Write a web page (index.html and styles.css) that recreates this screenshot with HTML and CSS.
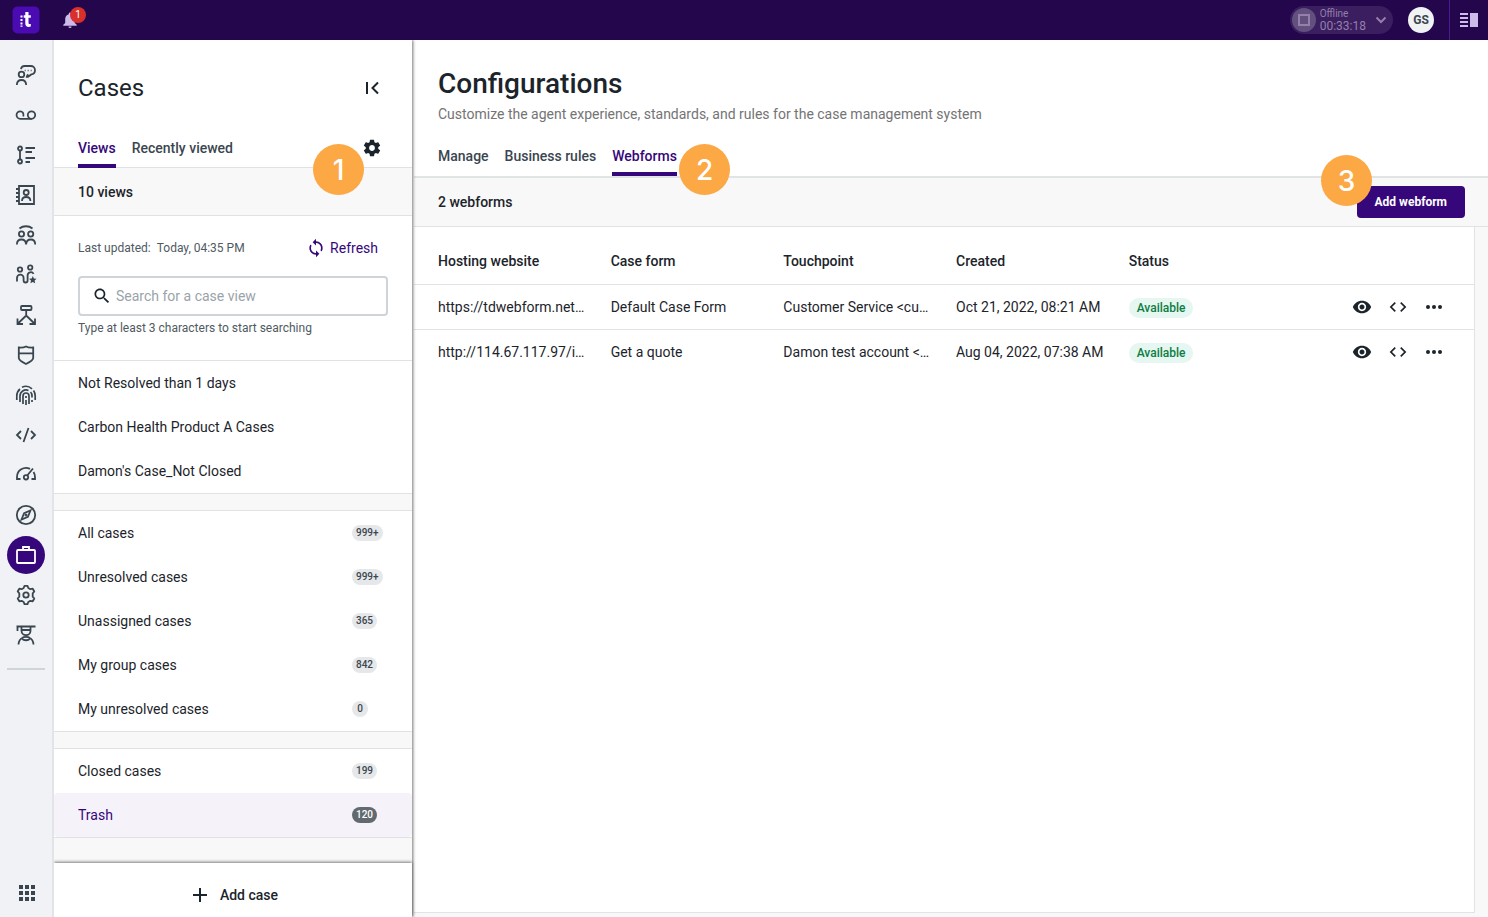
FILE: index.html
```html
<!DOCTYPE html>
<html lang="en">
<head>
  <meta charset="UTF-8" />
  <meta name="viewport" content="width=device-width, initial-scale=1.0"/>
  <title>Cases - Configurations</title>
  <link rel="stylesheet" href="styles.css">
</head>
<body>

  <header class="topbar">
    <a class="logo" href="#" aria-label="Home">
      <svg width="28" height="28" viewBox="0 0 28 28">
        <rect x="0.500" y="0.500" width="27" height="27" rx="5" fill="#4b0bb3"/>
        <path d="M13.300 6h3.200v3.200h2.300v2.500h-2.300v5c0 1 .4 1.400 1.200 1.400.4 0 .8 0 1.100-.2v2.600c-.6.300-1.200.4-2 .4-2.300 0-3.500-1.200-3.500-3.500v-5.700h-1.600V9.200h1.600z" fill="#fff"/>
        <path d="M8.500 9.500h2v2h-2zM8.500 13h2v2h-2zM8.500 16.500h2v2h-2zM8.500 19.500h2v1.200h-2z" fill="#fff"/>
      </svg>
    </a>
    <button class="bell" aria-label="Notifications">
      <svg width="16" height="18" viewBox="0 0 16 18" fill="#cdbbe9">
        <path d="M8 1.500a1.200 1.200 0 0 0-1.200 1.200v.5C4.500 3.800 3.200 5.700 3.200 8v4L1.300 13.800v.9h13.400v-.9L12.800 12V8c0-2.300-1.300-4.200-3.600-4.800v-.5A1.200 1.200 0 0 0 8 1.500zM6.400 15.500a1.600 1.600 0 0 0 3.200 0z"/>
      </svg>
      <span class="bell-count">1</span>
    </button>
    <div class="topbar-right">
      <button class="agent-status">
        <span class="status-icon"><span></span></span>
        <span class="status-text">
          <span class="status-name">Offline</span>
          <span class="status-time">00:33:18</span>
        </span>
        <svg width="12" height="8" viewBox="0 0 12 8" fill="none" stroke="#957fab" stroke-width="2"><path d="M1.500 1.500 6 6l4.500-4.500"/></svg>
      </button>
      <button class="avatar">GS</button>
      <button class="panel-toggle" aria-label="Toggle side panel">
        <svg width="18" height="14" viewBox="0 0 18 14" fill="#cdbbe9"><path d="M0 0h8v2H0zM0 4h8v2H0zM0 8h8v2H0zM0 12h8v2H0zM10 0h8v14h-8z"/></svg>
      </button>
    </div>
  </header>

  <div class="layout">

    <nav class="rail" aria-label="Apps">
      <a href="#" aria-label="Conversations"><svg viewBox="0 0 24 24"><circle cx="7.500" cy="11.400" r="2.800"/><path d="M2.800 22c.2-3.300 2-5 4.700-5s4.500 1.700 4.700 5"/><path d="M7 6.200C7.300 4.200 8.700 3 10.600 3h6.200A4.200 4.200 0 0 1 21 7.200c0 2.400-1.500 3.900-3.700 4.200l-3.300 2.400h-1.200c.2-1.200.7-1.800 1.500-2.400"/><path d="M10.500 7.500h1.500M13.500 7.500H15M16.500 7.500H18" stroke-width="1.300" opacity=".6"/></svg></a>
      <a href="#" aria-label="Voicemail"><svg viewBox="0 0 24 24"><path d="M9.300 13.500c.8-2.900-.8-5.200-3-5.200a3.700 3.700 0 0 0 0 7.500h11.400"/><circle cx="17.500" cy="12.100" r="3.700"/></svg></a>
      <a href="#" aria-label="Activities"><svg viewBox="0 0 24 24"><circle cx="6" cy="5.500" r="2"/><circle cx="6" cy="18.500" r="2"/><path d="M6 7.500v9M11.500 5h9.500M11.500 9H18M11.500 15h9.500M11.500 19H16"/></svg></a>
      <a href="#" aria-label="Contacts"><svg viewBox="0 0 24 24"><path d="M5 3h15v18H5zM2 6h3M2 10h3M2 14h3M2 18h3"/><circle cx="12.200" cy="9.500" r="2.500"/><path d="M8 18c0-2.600 1.700-4 4.200-4s4.200 1.400 4.200 4"/></svg></a>
      <a href="#" aria-label="Teams"><svg viewBox="0 0 24 24"><circle cx="7.500" cy="11" r="2.600"/><circle cx="16.700" cy="11" r="2.600"/><path d="M2.900 21.500c0-3.300 1.700-5 4.600-5s4.400 1.700 4.600 5c.2-3.300 1.700-5 4.600-5s4.500 1.700 4.500 5M5.500 5.500c3.700-3 9.300-3 13 0"/></svg></a>
      <a href="#" aria-label="Engagement"><svg viewBox="0 0 24 24"><circle cx="6" cy="6.500" r="2.200"/><circle cx="16.200" cy="4.500" r="2.200"/><path d="M3 18.500v-3.500a3.300 3.300 0 0 1 6.600 0v2.500a2 2 0 0 0 4 0v-5a3.200 3.200 0 0 1 6-1.600"/><path d="m18.800 13 1.100 2.500 2.700.3-2 1.800.6 2.700-2.400-1.400-2.400 1.400.6-2.700-2-1.800 2.700-.3z" fill="#3a464f" stroke="none"/></svg></a>
      <a href="#" aria-label="Flows"><svg viewBox="0 0 24 24"><rect x="7" y="3" width="10.500" height="4" rx="1"/><path d="M12.200 7v5.500L4 20.500M12.200 12.500l8.200 8M3.500 15.500V21h5.500M21 15.500V21h-5.500"/></svg></a>
      <a href="#" aria-label="Guardian"><svg viewBox="0 0 24 24"><path d="M4.800 4.500c3 .2 5.400 0 7.200-1 1.800 1 4.200 1.200 7.200 1V15c0 2.300-3.800 4.300-7.200 6-3.400-1.700-7.200-3.700-7.200-6zM5 10.300h14"/></svg></a>
      <a href="#" aria-label="Identity"><svg viewBox="0 0 24 24"><path d="M2.800 17v-4a9.200 9.200 0 0 1 3.200-7M8 4.200a9.200 9.200 0 0 1 10 1.600M19.500 7.500a9.200 9.200 0 0 1 1.700 5.500v4M6 19v-6a6 6 0 0 1 8.500-5.500M16.500 9c1 1 1.500 2.500 1.500 4v1.500M18 17v2M9 21v-8a3 3 0 0 1 6 0v8M12 13v2M12 17v5" stroke-width="1.700"/></svg></a>
      <a href="#" aria-label="Builder"><svg viewBox="0 0 24 24"><path d="m7 8-4 4 4 4M17 8l4 4-4 4M14.500 5l-5 14"/></svg></a>
      <a href="#" aria-label="Live"><svg viewBox="0 0 24 24"><path d="M6.500 16H3v-2a9 9 0 0 1 13-8.100M19.500 8.900A9 9 0 0 1 21 14v2h-3.500M13.200 12.500l5.800-7"/><circle cx="12" cy="14.300" r="2.200"/></svg></a>
      <a href="#" aria-label="Explore"><svg viewBox="0 0 24 24"><circle cx="12" cy="12" r="9.200"/><path d="m16.500 7.500-2.600 6.400-6.400 2.600 2.600-6.400z"/><circle cx="12" cy="12" r=".6"/></svg></a>
      <a href="#" class="active" aria-label="Cases"><svg viewBox="0 0 24 24"><rect x="3" y="7" width="18" height="13" rx="1"/><path d="M9 7V4h6v3"/></svg></a>
      <a href="#" aria-label="Admin"><svg viewBox="0 0 24 24"><path d="m9.700 5 .8-2.200h3l.8 2.200 2.100 1.200 2.300-.5 1.600 2.800-1.600 1.800v3.400l1.600 1.800-1.600 2.800-2.300-.5-2.100 1.200-.8 2.200h-3L9.700 19l-2.100-1.200-2.300.5-1.600-2.800 1.600-1.800v-3.400L3.700 8.500l1.600-2.800 2.300.5z" stroke-linejoin="round"/><circle cx="12" cy="12" r="2.700"/></svg></a>
      <a href="#" aria-label="Training"><svg viewBox="0 0 24 24"><path d="M2.500 3.500h19M3.500 3.500V8M7.500 3.500v4.200a4.500 4.500 0 0 0 9 0V3.500M7.500 7h9M4.500 21.500c.2-3.500 1.500-5.500 4-6.500M19.500 21.500c-.2-3.500-1.500-5.500-4-6.500M8 15c1 3 7 3 8 0M8 15c2-1.500 6-1.500 8 0"/></svg></a>
      <hr>
      <button class="apps" aria-label="All apps">
        <svg width="16" height="16" viewBox="0 0 16 16"><path d="M0 0h4v4H0zM6 0h4v4H6zM12 0h4v4h-4zM0 6h4v4H0zM6 6h4v4H6zM12 6h4v4h-4zM0 12h4v4H0zM6 12h4v4H6zM12 12h4v4h-4z"/></svg>
      </button>
    </nav>

    <aside class="sidebar">
      <div class="sidebar-header">
        <h2>Cases</h2>
        <button class="icon-btn" aria-label="Collapse">
          <svg width="14" height="14" viewBox="0 0 14 14" fill="none" stroke="#1c242b" stroke-width="2"><path d="M2 1v12M13 1.500 7.500 7l5.500 5.500"/></svg>
        </button>
      </div>
      <div class="sidebar-tabs">
        <a href="#" class="tab active">Views</a>
        <a href="#" class="tab">Recently viewed</a>
        <button class="icon-btn settings" aria-label="Configurations">
          <svg width="20" height="20" viewBox="0 0 24 24" fill="#1c242b"><path d="M19.430 12.980c.04-.32.07-.64.07-.98s-.03-.66-.07-.98l2.110-1.650c.19-.15.24-.42.12-.64l-2-3.460c-.12-.22-.39-.3-.61-.22l-2.490 1c-.52-.4-1.080-.73-1.690-.98l-.38-2.650C14.460 2.180 14.250 2 14 2h-4c-.25 0-.46.18-.49.42l-.38 2.650c-.61.25-1.170.59-1.690.98l-2.490-1c-.23-.09-.49 0-.61.22l-2 3.460c-.13.22-.07.49.12.64l2.110 1.650c-.04.32-.07.65-.07.98s.03.66.07.98l-2.110 1.650c-.19.15-.24.42-.12.64l2 3.460c.12.22.39.3.61.22l2.490-1c.52.4 1.080.73 1.690.98l.38 2.650c.03.24.24.42.49.42h4c.25 0 .46-.18.49-.42l.38-2.650c.61-.25 1.170-.59 1.690-.98l2.490 1c.23.09.49 0 .61-.22l2-3.460c.12-.22.07-.49-.12-.64zM12 15.500c-1.930 0-3.500-1.570-3.500-3.500s1.570-3.500 3.500-3.500 3.500 1.570 3.500 3.500-1.570 3.500-3.500 3.500z"/></svg>
        </button>
        <span class="marker marker-1">1</span>
      </div>
      <div class="view-count">10 views</div>

      <div class="search-area">
        <div class="updated">
          <span>Last updated:</span>
          <span>Today, 04:35 PM</span>
          <button class="refresh">
            <svg width="20" height="20" viewBox="0 0 24 24" fill="#36077b"><path d="M12 4V1L8 5l4 4V6c3.310 0 6 2.690 6 6 0 1.010-.25 1.970-.7 2.800l1.460 1.460C19.540 15.030 20 13.570 20 12c0-4.420-3.580-8-8-8zm0 14c-3.310 0-6-2.690-6-6 0-1.010.25-1.970.7-2.800L5.240 7.740C4.460 8.970 4 10.430 4 12c0 4.420 3.580 8 8 8v3l4-4-4-4z"/></svg>
            Refresh
          </button>
        </div>
        <label class="search">
          <svg width="20" height="20" viewBox="0 0 24 24" fill="#1c242b"><path d="M15.500 14h-.79l-.28-.27C15.410 12.590 16 11.110 16 9.500 16 5.910 13.090 3 9.500 3S3 5.910 3 9.500 5.910 16 9.500 16c1.610 0 3.090-.59 4.230-1.570l.27.28v.79l5 4.990L20.490 19l-4.990-5zm-6 0C7.010 14 5 11.990 5 9.500S7.010 5 9.500 5 14 7.010 14 9.500 11.990 14 9.500 14z"/></svg>
          <input type="text" placeholder="Search for a case view" aria-label="Search for a case view">
        </label>
        <p class="hint">Type at least 3 characters to start searching</p>
      </div>

      <ul class="views">
        <li><a href="#">Not Resolved than 1 days</a></li>
        <li><a href="#">Carbon Health Product A Cases</a></li>
        <li><a href="#">Damon's Case_Not Closed</a></li>
      </ul>
      <ul class="views">
        <li><a href="#">All cases <span class="count-cell"><span class="count">999+</span></span></a></li>
        <li><a href="#">Unresolved cases <span class="count-cell"><span class="count">999+</span></span></a></li>
        <li><a href="#">Unassigned cases <span class="count-cell"><span class="count">365</span></span></a></li>
        <li><a href="#">My group cases <span class="count-cell"><span class="count">842</span></span></a></li>
        <li><a href="#">My unresolved cases <span class="count-cell"><span class="count">0</span></span></a></li>
      </ul>
      <ul class="views">
        <li><a href="#">Closed cases <span class="count-cell"><span class="count">199</span></span></a></li>
        <li><a href="#" class="selected">Trash <span class="count-cell"><span class="count">120</span></span></a></li>
      </ul>

      <div class="sidebar-footer">
        <button class="add-case">
          <svg width="14" height="14" viewBox="0 0 14 14" fill="#1c242b"><path d="M6 0h2v6h6v2H8v6H6V8H0V6h6z"/></svg>
          Add case
        </button>
      </div>
    </aside>

    <main class="main">
      <div class="main-header">
        <h1>Configurations</h1>
        <p>Customize the agent experience, standards, and rules for the case management system</p>
        <nav class="main-tabs">
          <a href="#" class="tab">Manage</a>
          <a href="#" class="tab">Business rules</a>
          <a href="#" class="tab active">Webforms<span class="marker marker-2">2</span></a>
        </nav>
      </div>
      <div class="toolbar">
        <span>2 webforms</span>
        <div class="toolbar-action">
          <button class="add-webform">Add webform</button>
          <span class="marker marker-3">3</span>
        </div>
      </div>
      <div class="table-wrap">
        <table>
          <thead>
            <tr>
              <th>Hosting website</th>
              <th>Case form</th>
              <th>Touchpoint</th>
              <th>Created</th>
              <th>Status</th>
              <th></th>
            </tr>
          </thead>
          <tbody>
            <tr>
              <td><span class="cut">https://tdwebform.netlify.app</span></td>
              <td>Default Case Form</td>
              <td><span class="cut">Customer Service &lt;customer&gt;</span></td>
              <td>Oct 21, 2022, 08:21 AM</td>
              <td><span class="badge">Available</span></td>
              <td class="actions">
                <button class="icon-btn" aria-label="Preview"><svg width="20" height="20" viewBox="0 0 24 24"><path d="M12 4.500C7 4.500 2.730 7.610 1 12c1.730 4.390 6 7.500 11 7.500s9.270-3.110 11-7.500c-1.730-4.390-6-7.500-11-7.500zM12 17c-2.760 0-5-2.240-5-5s2.240-5 5-5 5 2.240 5 5-2.240 5-5 5zm0-8c-1.660 0-3 1.340-3 3s1.340 3 3 3 3-1.340 3-3-1.340-3-3-3z"/></svg></button>
                <button class="icon-btn" aria-label="Embed code"><svg width="20" height="20" viewBox="0 0 24 24"><path d="M9.400 16.600L4.800 12l4.600-4.600L8 6l-6 6 6 6 1.400-1.400zm5.200 0l4.600-4.600-4.600-4.600L16 6l6 6-6 6-1.400-1.400z"/></svg></button>
                <button class="icon-btn" aria-label="More"><svg width="20" height="20" viewBox="0 0 20 20"><circle cx="4" cy="10" r="2"/><circle cx="10" cy="10" r="2"/><circle cx="16" cy="10" r="2"/></svg></button>
              </td>
            </tr>
            <tr>
              <td><span class="cut">http://114.67.117.97/index</span></td>
              <td>Get a quote</td>
              <td><span class="cut">Damon test account &lt;damon&gt;</span></td>
              <td>Aug 04, 2022, 07:38 AM</td>
              <td><span class="badge">Available</span></td>
              <td class="actions">
                <button class="icon-btn" aria-label="Preview"><svg width="20" height="20" viewBox="0 0 24 24"><path d="M12 4.500C7 4.500 2.730 7.610 1 12c1.730 4.390 6 7.500 11 7.500s9.270-3.110 11-7.500c-1.730-4.390-6-7.500-11-7.500zM12 17c-2.760 0-5-2.240-5-5s2.240-5 5-5 5 2.240 5 5-2.240 5-5 5zm0-8c-1.660 0-3 1.340-3 3s1.340 3 3 3 3-1.340 3-3-1.340-3-3-3z"/></svg></button>
                <button class="icon-btn" aria-label="Embed code"><svg width="20" height="20" viewBox="0 0 24 24"><path d="M9.400 16.600L4.800 12l4.600-4.600L8 6l-6 6 6 6 1.400-1.400zm5.200 0l4.600-4.600-4.600-4.600L16 6l6 6-6 6-1.400-1.400z"/></svg></button>
                <button class="icon-btn" aria-label="More"><svg width="20" height="20" viewBox="0 0 20 20"><circle cx="4" cy="10" r="2"/><circle cx="10" cy="10" r="2"/><circle cx="16" cy="10" r="2"/></svg></button>
              </td>
            </tr>
          </tbody>
        </table>
      </div>
    </main>

  </div>

</body>
</html>
```
FILE: styles.css
```css
* {
  box-sizing: border-box;
}

body {
  margin: 0;
  min-height: 100vh;
  display: flex;
  flex-direction: column;
  font-family: Roboto, sans-serif;
  font-size: 14px;
  line-height: 20px;
  color: #1c242b;
  background: #fff;
}

a {
  color: inherit;
  text-decoration: none;
}

button {
  padding: 0;
  border: none;
  background: none;
  font: inherit;
  color: inherit;
  cursor: pointer;
}

svg {
  display: block;
  flex: none;
}

/* Top bar */
.topbar {
  position: relative;
  z-index: 1;
  display: flex;
  align-items: center;
  height: 40px;
  padding-left: 12px;
  background: #23064b;
}

.bell {
  position: relative;
  margin-left: 22px;
}

.bell-count {
  position: absolute;
  left: 8px;
  top: -4px;
  width: 16px;
  height: 16px;
  border-radius: 50%;
  background: #d9302c;
  color: #fff;
  font-size: 10px;
  line-height: 16px;
}

.topbar-right {
  display: flex;
  align-items: center;
  margin-left: auto;
}

.agent-status {
  display: flex;
  align-items: center;
  gap: 4px;
  height: 28px;
  padding: 0 6px 0 2px;
  border-radius: 14px;
  background: #3a1e60;
  color: #957fab;
  text-align: left;
}

.agent-status svg {
  margin-left: 5px;
}

.status-icon {
  display: flex;
  align-items: center;
  justify-content: center;
  width: 24px;
  height: 24px;
  border-radius: 50%;
  background: #62517e;
}

.status-icon span {
  width: 12px;
  height: 12px;
  border: 2px solid #957fab;
}

.status-text {
  display: flex;
  flex-direction: column;
}

.status-name {
  font-size: 10px;
  line-height: 12px;
}

.status-time {
  font-size: 12px;
  line-height: 12px;
}

.avatar {
  width: 26px;
  height: 26px;
  margin: 0 15px;
  border-radius: 50%;
  background: #f0f2f4;
  color: #3a464f;
  font-size: 12px;
  font-weight: 700;
}

.panel-toggle {
  display: flex;
  align-items: center;
  height: 40px;
  padding: 0 10px;
  border-left: 1px solid #4b1c91;
}

/* Left rail */
.layout {
  flex: 1;
  display: flex;
}

.rail {
  position: relative;
  z-index: 1;
  flex: none;
  display: flex;
  flex-direction: column;
  align-items: center;
  gap: 2px;
  width: 54px;
  padding: 16px 0 12px;
  border-right: 2px solid #e2e4e7;
  background: #f0f2f5;
}

.rail a {
  display: flex;
  align-items: center;
  justify-content: center;
  width: 38px;
  height: 38px;
  border-radius: 50%;
}

.rail a svg {
  width: 24px;
  height: 24px;
  fill: none;
  stroke: #3a464f;
  stroke-width: 1.8px;
}

.rail a.active {
  background: #36077b;
}

.rail a.active svg {
  stroke: #fff;
}

.rail hr {
  width: 38px;
  margin: 12px 0;
  border: none;
  border-top: 2px solid #cfd4d8;
}

.apps {
  margin-top: auto;
  padding: 4px 4px 4px 6px;
}

.apps svg {
  fill: #3a464f;
}

/* Sidebar */
.sidebar {
  position: relative;
  flex: none;
  display: flex;
  flex-direction: column;
  width: 358px;
  background: #f8f8f8;
  box-shadow: 1px 0 3px rgba(0, 0, 0, 0.5);
}

.sidebar-header {
  display: flex;
  align-items: center;
  justify-content: space-between;
  padding: 32px 33px 24px 24px;
  background: #fff;
}

.sidebar-header h2 {
  margin: 0;
  font-size: 24px;
  font-weight: 400;
  line-height: 32px;
}

.sidebar-tabs {
  position: relative;
  display: flex;
  gap: 16px;
  height: 40px;
  padding: 0 30px 0 24px;
  border-bottom: 1px solid #e0e3e5;
  background: #fff;
}

.sidebar-tabs .tab {
  height: 40px;
}

.tab {
  position: relative;
  padding: 10px 0 6px;
  border-bottom: 4px solid transparent;
  color: #3a464f;
  font-weight: 500;
}

.tab.active {
  border-color: #36077b;
  color: #36077b;
}

.icon-btn svg {
  fill: #1c242b;
}

.sidebar-header .icon-btn svg {
  fill: none;
}

.settings {
  margin-left: auto;
}

.view-count {
  padding: 14px 24px 13px;
  border-bottom: 1px solid #e0e3e5;
  font-weight: 500;
}

.search-area {
  padding: 22px 24px;
  background: #fff;
}

.updated {
  display: flex;
  align-items: center;
  gap: 6px;
  color: #4f5a62;
  font-size: 12px;
}

.refresh {
  display: flex;
  align-items: center;
  gap: 4px;
  margin-left: auto;
  margin-right: 10px;
  color: #36077b;
  font-size: 14px;
}

.search {
  display: flex;
  align-items: center;
  gap: 4px;
  height: 40px;
  margin-top: 18px;
  padding: 0 12px;
  border: 2px solid #cfd4d8;
  border-radius: 4px;
}

.search input {
  flex: 1;
  min-width: 0;
  padding: 0;
  border: none;
  outline: none;
  background: none;
  font: inherit;
  color: inherit;
}

.search input::placeholder {
  color: #9aa3a9;
}

.hint {
  margin: 2px 0 0;
  color: #4f5a62;
  font-size: 12px;
}

.views {
  margin: 0 0 16px;
  padding: 0;
  border-top: 1px solid #e0e3e5;
  border-bottom: 1px solid #e0e3e5;
  background: #fff;
  list-style: none;
}

.views a {
  display: flex;
  align-items: center;
  justify-content: space-between;
  height: 44px;
  padding: 0 24px;
}

.views a.selected {
  border-radius: 4px;
  background: #f5f2fa;
  color: #36077b;
}

.count-cell {
  display: flex;
  width: 36px;
}

.count {
  min-width: 16px;
  padding: 0 4px;
  border-radius: 8px;
  background: #e5e7e9;
  color: #3a464f;
  font-size: 10px;
  font-weight: 500;
  line-height: 16px;
  text-align: center;
}

.selected .count {
  background: #626a6f;
  color: #fff;
}

.sidebar-footer {
  margin-top: auto;
  padding: 22px 0 12px 5px;
  background: #fff;
  box-shadow: 0 -1px 3px rgba(0, 0, 0, 0.5);
}

.add-case {
  display: flex;
  align-items: center;
  gap: 13px;
  margin: 0 auto;
  font-weight: 500;
}

/* Main */
.main {
  flex: 1;
  display: flex;
  flex-direction: column;
  min-width: 0;
  padding: 0 0 4px 2px;
  background: #f8f8f8;
}

.main-header {
  padding: 26px 24px 0;
  border-bottom: 2px solid #e0e4e4;
  background: #fff;
}

.main-header h1 {
  margin: 0;
  font-size: 28px;
  font-weight: 500;
  line-height: 36px;
}

.main-header p {
  margin: 2px 0 0;
  color: #747474;
}

.main-tabs {
  display: flex;
  gap: 16px;
  padding-top: 12px;
}

.toolbar {
  display: flex;
  align-items: center;
  justify-content: space-between;
  padding: 8px 23px 8px 24px;
  border-bottom: 1px solid #e0e3e5;
  font-weight: 500;
}

.toolbar-action {
  position: relative;
}

.add-webform {
  height: 32px;
  padding: 0 18px;
  border-radius: 4px;
  background: #36077b;
  color: #fff;
  font-size: 12px;
  font-weight: 700;
}

.table-wrap {
  flex: 1;
  margin-right: 13px;
  border-right: 1px solid #e0e3e5;
  border-bottom: 1px solid #e0e3e5;
  background: #fff;
}

table,
thead,
tbody {
  display: block;
}

tr {
  display: grid;
  grid-template-columns: repeat(6, minmax(0, 1fr));
  align-items: center;
  height: 45px;
  padding-left: 24px;
  border-bottom: 1px solid #e3e3e3;
}

thead tr {
  height: 58px;
  padding-top: 11px;
}

tbody tr:last-child {
  border-color: transparent;
}

th,
td {
  padding: 0;
  font-weight: 500;
  text-align: left;
}

td {
  font-weight: 400;
}

.cut {
  display: block;
  padding-right: 24px;
  overflow: hidden;
  text-overflow: ellipsis;
  white-space: nowrap;
}

.badge {
  display: inline-block;
  padding: 0 8px;
  border-radius: 10px;
  background: #e6f6f0;
  color: #0c7d44;
  font-size: 12px;
  font-weight: 500;
}

.actions {
  display: flex;
  justify-content: flex-end;
  gap: 16px;
  padding-right: 30px;
}

/* Numbered markers */
.marker {
  position: absolute;
  width: 51px;
  height: 51px;
  border-radius: 50%;
  background: #fba845;
  color: #fff;
  font-family: Inter, sans-serif;
  font-size: 28px;
  font-weight: 500;
  line-height: 53px;
  text-align: center;
}

.marker-1 {
  right: 48px;
  top: 16px;
}

.marker-2 {
  left: 67px;
  top: 8px;
}

.marker-3 {
  right: 93px;
  top: -31px;
}
```
